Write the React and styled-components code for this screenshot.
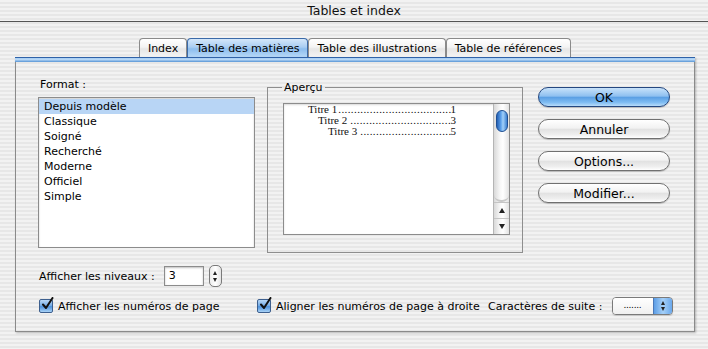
import React from "react";
import styled, { createGlobalStyle } from "styled-components";

const pinstripe =
  "repeating-linear-gradient(to bottom, #f2f2f2 0px, #f2f2f2 2px, #e7e7e7 2px, #e7e7e7 4px)";

const GlobalStyle = createGlobalStyle`
  html, body { margin: 0; padding: 0; }
  body {
    width: 708px;
    height: 349px;
    overflow: hidden;
    font-family: "DejaVu Sans", "Lucida Grande", sans-serif;
    color: #000;
    background: ${pinstripe};
  }
`;

const Window = styled.div`
  width: 708px;
  height: 349px;
  display: flex;
  flex-direction: column;
`;

const TitleBar = styled.div`
  height: 21px;
  border-bottom: 1px solid #555;
  display: flex;
  align-items: center;
  justify-content: center;
  font-size: 12.5px;
  color: #111;
`;

const TabStrip = styled.div`
  margin-top: 16px;
  padding: 0 13px 0 15px;
  height: 19px;
  display: flex;
  justify-content: center;
`;

const Tab = styled.div`
  height: 19px;
  box-sizing: border-box;
  padding: 0 ${p => p.pad}px;
  border: 1px solid ${p => (p.active ? "#3b6aa8" : "#8a8a8a")};
  border-bottom: none;
  border-radius: 4px 4px 0 0;
  display: flex;
  align-items: center;
  font-size: 11px;
  background: ${p =>
    p.active
      ? "linear-gradient(to bottom, #d4e7fa 0%, #a9cdf2 45%, #8cbdee 55%, #b6d8f7 100%)"
      : "linear-gradient(to bottom, #ffffff 0%, #f3f3f3 45%, #e6e6e6 55%, #f4f4f4 100%)"};
`;

const Pane = styled.div`
  margin: 0 13px 0 15px;
  height: 275px;
  box-sizing: border-box;
  border: 1px solid #8a8a8a;
  border-top: none;
  box-shadow: 1px 1px 2px rgba(0, 0, 0, 0.25);
  display: flex;
  flex-direction: column;
`;

const PaneBar = styled.div`
  height: 5px;
  margin: 0 -1px;
  background: linear-gradient(
    to bottom,
    #2f62a8 0px,
    #2f62a8 1px,
    #a6cdf3 1px,
    #bcdaf7 3px,
    #6aa2dc 4px,
    #6aa2dc 5px
  );
`;

const PaneBody = styled.div`
  padding: 16px 0 0 22px;
  display: flex;
  flex-direction: column;
`;

const TopSection = styled.div`
  display: flex;
  align-items: flex-start;
`;

const FormatCol = styled.div`
  width: 217px;
  display: flex;
  flex-direction: column;
`;

const Label = styled.div`
  font-size: 11px;
  height: ${p => p.h || 13}px;
  line-height: 13px;
  padding-left: ${p => p.indent || 0}px;
  white-space: nowrap;
`;

const ListBox = styled.div`
  height: 151px;
  box-sizing: border-box;
  background: #fff;
  border: 1px solid #8c8c8c;
  box-shadow: inset 0 1px 2px rgba(0, 0, 0, 0.2);
  padding-top: 1px;
`;

const ListItem = styled.div`
  height: 15px;
  line-height: 15px;
  padding-left: 5px;
  font-size: 11px;
  background: ${p => (p.selected ? "#b8d5f5" : "transparent")};
`;

const Group = styled.fieldset`
  margin: 3px 0 0 12px;
  width: 256px;
  height: 172px;
  box-sizing: border-box;
  padding: 0;
  border: 1px solid #8e8e8e;
`;

const Legend = styled.legend`
  margin-left: 14px;
  padding: 0 2px;
  font-size: 11px;
  line-height: 13px;
`;

const Preview = styled.div`
  margin: 9px 0 0 15px;
  width: 227px;
  height: 132px;
  box-sizing: border-box;
  background: #fff;
  border: 1px solid #8c8c8c;
  box-shadow: inset 0 1px 2px rgba(0, 0, 0, 0.15);
  display: flex;
`;

const PreviewText = styled.div`
  flex: 1;
  font-family: "Liberation Serif", "Times New Roman", serif;
  font-size: 11px;
  color: #111;
`;

const TocRow = styled.div`
  height: 11px;
  line-height: 11px;
  margin-left: ${p => p.indent}px;
  width: ${p => 148 - (p.indent - 24)}px;
  display: flex;
`;

const Leader = styled.span`
  flex: 1;
  overflow: hidden;
  white-space: nowrap;
  letter-spacing: 0.4px;
  padding: 0 ${p => (p.gap ? 3 : 1)}px;
  &::before {
    content: "................................................................";
  }
`;

const ScrollBar = styled.div`
  width: 15px;
  border-left: 1px solid #b5b5b5;
  display: flex;
  flex-direction: column;
  background: linear-gradient(to right, #d9d9d9, #f7f7f7 40%, #ffffff 60%, #e2e2e2);
`;

const Track = styled.div`
  flex: 1;
  padding-top: 6px;
  display: flex;
  justify-content: center;
  border-bottom-left-radius: 7px;
  border-bottom-right-radius: 7px;
  border-bottom: 2px solid #c8c8c8;
`;

const Thumb = styled.div`
  width: 12px;
  height: 22px;
  border-radius: 6px;
  box-sizing: border-box;
  border: 1px solid #1f4f92;
  background: linear-gradient(to right, #2460b4, #5fa3ec 40%, #a2d0f9 60%, #3a7fd0);
`;

const ArrowButton = styled.div`
  height: 15px;
  display: flex;
  align-items: center;
  justify-content: center;
  border-top: 1px solid #c4c4c4;
  &::after {
    content: "";
    border-left: 3.5px solid transparent;
    border-right: 3.5px solid transparent;
    ${p =>
      p.up
        ? "border-bottom: 5px solid #222;"
        : "border-top: 5px solid #222;"}
  }
`;

const ButtonCol = styled.div`
  margin: 9px 0 0 15px;
  display: flex;
  flex-direction: column;
  gap: 12px;
`;

const AquaButton = styled.div`
  width: 132px;
  height: 20px;
  box-sizing: border-box;
  border-radius: 10px;
  display: flex;
  align-items: center;
  justify-content: center;
  font-size: 12.5px;
  border: 1px solid ${p => (p.primary ? "#24477f" : "#707070")};
  box-shadow: 0 1px 1px rgba(0, 0, 0, 0.2);
  background: ${p =>
    p.primary
      ? "linear-gradient(to bottom, #c8e2fa 0%, #8fc0f0 45%, #5b9fe4 52%, #7fbcf2 80%, #b8dcfa 100%)"
      : "linear-gradient(to bottom, #ffffff 0%, #f2f2f2 45%, #e2e2e2 52%, #eeeeee 80%, #ffffff 100%)"};
`;

const LevelsRow = styled.div`
  margin-top: 12px;
  padding-left: 1px;
  height: 22px;
  display: flex;
  align-items: center;
`;

const NumberField = styled.div`
  margin-left: 9px;
  width: 40px;
  height: 20px;
  box-sizing: border-box;
  background: #fff;
  border: 1px solid #8c8c8c;
  box-shadow: inset 0 1px 2px rgba(0, 0, 0, 0.25);
  padding-left: 4px;
  font-size: 11px;
  line-height: 18px;
`;

const Stepper = styled.div`
  margin-left: 5px;
  width: 13px;
  height: 22px;
  box-sizing: border-box;
  border: 1px solid #7a7a7a;
  border-radius: 5px;
  background: linear-gradient(to right, #ececec, #ffffff 50%, #e4e4e4);
  display: flex;
  flex-direction: column;
  align-items: center;
  justify-content: center;
  gap: 3px;
`;

const StepArrow = styled.span`
  border-left: 2.5px solid transparent;
  border-right: 2.5px solid transparent;
  ${p => (p.up ? "border-bottom: 4px solid #222;" : "border-top: 4px solid #222;")}
`;

const OptionsRow = styled.div`
  margin-top: 9px;
  padding-left: 1px;
  display: grid;
  grid-template-columns: 218px 231px auto;
  align-items: center;
  height: 20px;
`;

const CheckItem = styled.div`
  display: flex;
  align-items: center;
  gap: 5px;
  font-size: 11px;
  white-space: nowrap;
`;

const CheckBox = styled.div`
  width: 14px;
  height: 14px;
  box-sizing: border-box;
  border: 1px solid #3d5f8e;
  border-radius: 2px;
  background: linear-gradient(to bottom, #b9d8f6 0%, #6fa8e4 50%, #4d92dc 55%, #a9d2f6 100%);
  position: relative;
  svg {
    position: absolute;
    left: 1px;
    top: -3px;
  }
`;

const SuiteItem = styled.div`
  display: flex;
  align-items: center;
  gap: 10px;
  font-size: 11px;
  white-space: nowrap;
`;

const PopUp = styled.div`
  width: 61px;
  height: 18px;
  box-sizing: border-box;
  border: 1px solid #7a7a7a;
  border-radius: 4px;
  display: flex;
  overflow: hidden;
  box-shadow: 0 1px 1px rgba(0, 0, 0, 0.15);
`;

const PopValue = styled.div`
  flex: 1;
  background: linear-gradient(to bottom, #ffffff, #f0f0f0);
  font-size: 9px;
  line-height: 14px;
  padding-left: 10px;
  letter-spacing: -0.3px;
`;

const PopArrows = styled.div`
  width: 18px;
  border-left: 1px solid #4a78b8;
  background: linear-gradient(to right, #5d9ee6, #a5d0f8 50%, #6aa8ec);
  display: flex;
  flex-direction: column;
  align-items: center;
  justify-content: center;
  gap: 2px;
`;

const formats = [
  "Depuis modèle",
  "Classique",
  "Soigné",
  "Recherché",
  "Moderne",
  "Officiel",
  "Simple"
];

const tocRows = [
  { title: "Titre 1", page: "1", indent: 24, gap: false },
  { title: "Titre 2", page: "3", indent: 34, gap: true },
  { title: "Titre 3", page: "5", indent: 44, gap: true }
];

const Check = () => (
  <CheckBox>
    <svg width="13" height="14" viewBox="0 0 13 14">
      <path
        d="M2 7.5 L5 11 L11.5 1"
        fill="none"
        stroke="#111"
        strokeWidth="2"
        strokeLinecap="round"
        strokeLinejoin="round"
      />
    </svg>
  </CheckBox>
);

export default function App() {
  return (
    <Window>
      <GlobalStyle />
      <TitleBar>Tables et index</TitleBar>
      <TabStrip>
        <Tab pad={8}>Index</Tab>
        <Tab pad={8} active>
          Table des matières
        </Tab>
        <Tab pad={8}>Table des illustrations</Tab>
        <Tab pad={8}>Table de références</Tab>
      </TabStrip>
      <Pane>
        <PaneBar />
        <PaneBody>
          <TopSection>
            <FormatCol>
              <Label h={19} indent={2}>
                Format :
              </Label>
              <ListBox>
                {formats.map((f, i) => (
                  <ListItem key={f} selected={i === 0}>
                    {f}
                  </ListItem>
                ))}
              </ListBox>
            </FormatCol>
            <Group>
              <Legend>Aperçu</Legend>
              <Preview>
                <PreviewText>
                  {tocRows.map(r => (
                    <TocRow key={r.title} indent={r.indent}>
                      <span>{r.title}</span>
                      <Leader gap={r.gap} />
                      <span>{r.page}</span>
                    </TocRow>
                  ))}
                </PreviewText>
                <ScrollBar>
                  <Track>
                    <Thumb />
                  </Track>
                  <ArrowButton up />
                  <ArrowButton />
                </ScrollBar>
              </Preview>
            </Group>
            <ButtonCol>
              <AquaButton primary>OK</AquaButton>
              <AquaButton>Annuler</AquaButton>
              <AquaButton>Options...</AquaButton>
              <AquaButton>Modifier...</AquaButton>
            </ButtonCol>
          </TopSection>
          <LevelsRow>
            <Label>Afficher les niveaux :</Label>
            <NumberField>3</NumberField>
            <Stepper>
              <StepArrow up />
              <StepArrow />
            </Stepper>
          </LevelsRow>
          <OptionsRow>
            <CheckItem>
              <Check />
              Afficher les numéros de page
            </CheckItem>
            <CheckItem>
              <Check />
              Aligner les numéros de page à droite
            </CheckItem>
            <SuiteItem>
              Caractères de suite :
              <PopUp>
                <PopValue>.......</PopValue>
                <PopArrows>
                  <StepArrow up />
                  <StepArrow />
                </PopArrows>
              </PopUp>
            </SuiteItem>
          </OptionsRow>
        </PaneBody>
      </Pane>
    </Window>
  );
}
